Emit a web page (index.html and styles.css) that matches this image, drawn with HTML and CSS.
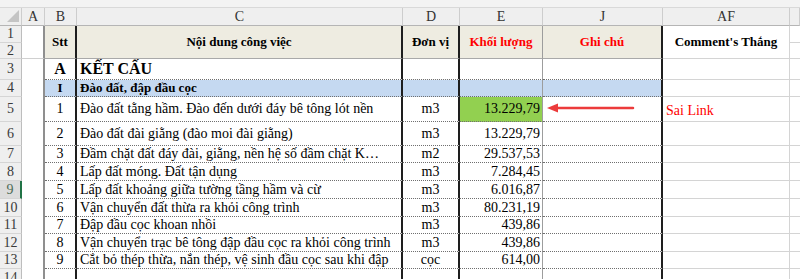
FILE: index.html
```html
<!DOCTYPE html>
<html lang="vi">
<head>
<meta charset="utf-8">
<title>Bảng khối lượng</title>
<link rel="stylesheet" href="styles.css">
</head>
<body>
<div class="sheet">
  <div class="topbar"></div>
  <table class="grid">
    <colgroup>
      <col class="w-rh"><col class="w-a"><col class="w-b"><col class="w-c"><col class="w-d"><col class="w-e"><col class="w-j"><col class="w-af"><col class="w-x">
    </colgroup>
    <tr class="h-ch">
      <td class="ch corner"><svg class="tri" width="14" height="14" viewBox="0 0 14 14"><polygon points="13,1 13,13 1,13" fill="#c4c4c4"/></svg></td>
      <td class="ch">A</td><td class="ch">B</td><td class="ch">C</td><td class="ch">D</td><td class="ch">E</td><td class="ch">J</td><td class="ch">AF</td><td class="ch"></td>
    </tr>
    <tr class="h1">
      <td class="rh">1</td><td class="ca"></td>
      <td class="hd cb" rowspan="2">Stt</td>
      <td class="hd cc" rowspan="2">Nội dung công việc</td>
      <td class="hd cd" rowspan="2">Đơn vị</td>
      <td class="hd ce red" rowspan="2">Khối lượng</td>
      <td class="hd cj red" rowspan="2">Ghi chú</td>
      <td class="hd-af" rowspan="2">Comment's Thắng</td>
      <td class="cx"></td>
    </tr>
    <tr class="h2">
      <td class="rh">2</td><td class="ca ca-last"></td><td class="cx"></td>
    </tr>
    <tr class="h3">
      <td class="rh">3</td><td class="ca"></td>
      <td class="cb big">A</td><td class="cc big left">KẾT CẤU</td><td class="cd"></td><td class="ce"></td><td class="cj"></td><td class="af"></td><td class="cx"></td>
    </tr>
    <tr class="h4 blue">
      <td class="rh">4</td><td class="ca"></td>
      <td class="cb b">I</td><td class="cc b left">Đào đất, đập đầu cọc</td><td class="cd"></td><td class="ce"></td><td class="cj"></td><td class="af"></td><td class="cx"></td>
    </tr>
    <tr class="h5">
      <td class="rh">5</td><td class="ca"></td>
      <td class="cb">1</td><td class="cc left">Đào đất tằng hầm. Đào đến dưới đáy bê tông lót nền</td><td class="cd">m3</td><td class="ce num green">13.229,79</td><td class="cj"></td><td class="af sai">Sai Link</td><td class="cx"></td>
    </tr>
    <tr class="h6">
      <td class="rh">6</td><td class="ca"></td>
      <td class="cb">2</td><td class="cc left">Đào đất đài giằng (đào moi đài giằng)</td><td class="cd">m3</td><td class="ce num">13.229,79</td><td class="cj"></td><td class="af"></td><td class="cx"></td>
    </tr>
    <tr class="h7">
      <td class="rh">7</td><td class="ca"></td>
      <td class="cb">3</td><td class="cc left">Đầm chặt đất đáy đài, giằng, nền hệ số đầm chặt K…</td><td class="cd">m2</td><td class="ce num">29.537,53</td><td class="cj"></td><td class="af"></td><td class="cx"></td>
    </tr>
    <tr class="h8">
      <td class="rh">8</td><td class="ca"></td>
      <td class="cb">4</td><td class="cc left">Lấp đất móng. Đất tận dụng</td><td class="cd">m3</td><td class="ce num">7.284,45</td><td class="cj"></td><td class="af"></td><td class="cx"></td>
    </tr>
    <tr class="h9">
      <td class="rh sel">9</td><td class="ca"></td>
      <td class="cb">5</td><td class="cc left">Lấp đất khoảng giữa tường tầng hầm và cừ</td><td class="cd">m3</td><td class="ce num">6.016,87</td><td class="cj"></td><td class="af"></td><td class="cx"></td>
    </tr>
    <tr class="h10">
      <td class="rh">10</td><td class="ca"></td>
      <td class="cb">6</td><td class="cc left">Vận chuyển đất thừa ra khỏi công trình</td><td class="cd">m3</td><td class="ce num">80.231,19</td><td class="cj"></td><td class="af"></td><td class="cx"></td>
    </tr>
    <tr class="h11">
      <td class="rh">11</td><td class="ca"></td>
      <td class="cb">7</td><td class="cc left">Đập đầu cọc khoan nhồi</td><td class="cd">m3</td><td class="ce num">439,86</td><td class="cj"></td><td class="af"></td><td class="cx"></td>
    </tr>
    <tr class="h12">
      <td class="rh">12</td><td class="ca"></td>
      <td class="cb">8</td><td class="cc left">Vận chuyển trạc bê tông đập đầu cọc ra khỏi công trình</td><td class="cd">m3</td><td class="ce num">439,86</td><td class="cj"></td><td class="af"></td><td class="cx"></td>
    </tr>
    <tr class="h13">
      <td class="rh">13</td><td class="ca"></td>
      <td class="cb">9</td><td class="cc left">Cắt bỏ thép thừa, nắn thép, vệ sinh đầu cọc sau khi đập</td><td class="cd">cọc</td><td class="ce num">614,00</td><td class="cj"></td><td class="af"></td><td class="cx"></td>
    </tr>
    <tr class="h14">
      <td class="rh">14</td><td class="ca"></td>
      <td class="cb nob"></td><td class="cc nob"></td><td class="cd nob"></td><td class="ce nob"></td><td class="cj nob"></td><td class="af"></td><td class="cx"></td>
    </tr>
  </table>
  <svg class="arrow" width="100" height="14" viewBox="0 0 100 14">
    <line x1="8" y1="7" x2="86" y2="7" stroke="#ec3b3b" stroke-width="2.5" stroke-linecap="round"/>
    <polygon points="0,7 11,2.5 11,11.5" fill="#ec3b3b"/>
  </svg>
</div>
</body>
</html>
```

FILE: styles.css
```css
body {
  margin: 0;
  background: #ffffff;
  font-family: "Liberation Serif", "Times New Roman", serif;
}

.sheet {
  position: relative;
  width: 800px;
  height: 279px;
  overflow: hidden;
}

.topbar {
  height: 7px;
  background: #f3f3f3;
  border-bottom: 1px solid #d9d9d9;
}

.grid {
  border-collapse: separate;
  border-spacing: 0;
  table-layout: fixed;
  width: 800px;
}

.grid td {
  padding: 0;
  font-size: 14px;
  line-height: 14px;
  white-space: nowrap;
  overflow: hidden;
  vertical-align: middle;
  text-align: center;
  color: #000;
}

.w-rh { width: 22px; }
.w-a { width: 23px; }
.w-b { width: 32px; }
.w-c { width: 326px; }
.w-d { width: 57px; }
.w-e { width: 83px; }
.w-j { width: 120px; }
.w-af { width: 127px; }
.w-x { width: 10px; }

/* row heights */
.h-ch { height: 18px; }
.h1 { height: 17px; }
.h2 { height: 16px; }
.h3 { height: 21px; }
.h4 { height: 17px; }
.h5 { height: 25px; }
.h6 { height: 24px; }
.h7 { height: 17px; }
.h8 { height: 18px; }
.h9 { height: 18px; }
.h10 { height: 18px; }
.h11 { height: 17px; }
.h12 { height: 18px; }
.h13 { height: 17px; }
.h14 { height: 18px; }

/* column headers */
.grid td.ch {
  background: #efefef;
  color: #333;
  border-right: 1px solid #cdcdcd;
  border-bottom: 1px solid #b5b5b5;
}

.grid td.corner {
  text-align: right;
  vertical-align: bottom;
}

.tri {
  display: block;
  margin: 0 1px 2px auto;
}

/* row headers */
.grid td.rh {
  background: #efefef;
  color: #3a3a3a;
  border-right: 1px solid #bdbdbd;
  border-bottom: 1px solid #d5d5d5;
}

.grid td.rh.sel {
  background: #dcdcdc;
  color: #4b6b55;
  border-right: 2px solid #217346;
}

/* column A */
.grid td.ca {
  border-right: 2px solid #8f8f8f;
}

.grid td.ca-last {
  border-bottom: 1px solid #d0d0d0;
}

/* bordered table region */
.grid td.cb,
.grid td.cc,
.grid td.cd,
.grid td.ce,
.grid td.cj {
  border-bottom: 1px dotted #6f6f6f;
}

.grid td.cb { border-right: 2px solid #1e1e1e; }
.grid td.cc { border-right: 2px solid #1e1e1e; }
.grid td.cd { border-right: 2px solid #1e1e1e; }
.grid td.ce { border-right: 1px solid #9d9d9d; }
.grid td.cj { border-right: 2px solid #1e1e1e; }

.grid td.nob { border-bottom: 0; }

.grid td.hd {
  background: #eeece1;
  font-weight: bold;
  font-size: 13px;
  border-bottom: 1px solid #a9a9a9;
}

.grid td.hd-af {
  font-weight: bold;
  font-size: 13px;
  border-right: 1px solid #d4d4d4;
  border-bottom: 1px solid #d4d4d4;
}

.grid td.af {
  text-align: left;
  border-right: 1px solid #d4d4d4;
  border-bottom: 1px solid #d4d4d4;
}

.grid td.cx {
  border-bottom: 1px solid #d4d4d4;
}

.grid td.red { color: #ff0000; }

.grid td.left {
  text-align: left;
  padding-left: 3px;
}

.grid td.num {
  text-align: right;
  padding-right: 2px;
}

.grid td.b {
  font-weight: bold;
  font-size: 13px;
}

.grid td.big {
  font-weight: bold;
  font-size: 16px;
  line-height: 16px;
}

.grid tr.blue td.cb,
.grid tr.blue td.cc,
.grid tr.blue td.cd,
.grid tr.blue td.ce,
.grid tr.blue td.cj {
  background: #c5d9f1;
}

.grid td.green { background: #92d050; }

.grid td.sai {
  color: #ff0000;
  padding-left: 3px;
  padding-top: 3px;
}

.arrow {
  position: absolute;
  left: 547px;
  top: 101px;
}
```
